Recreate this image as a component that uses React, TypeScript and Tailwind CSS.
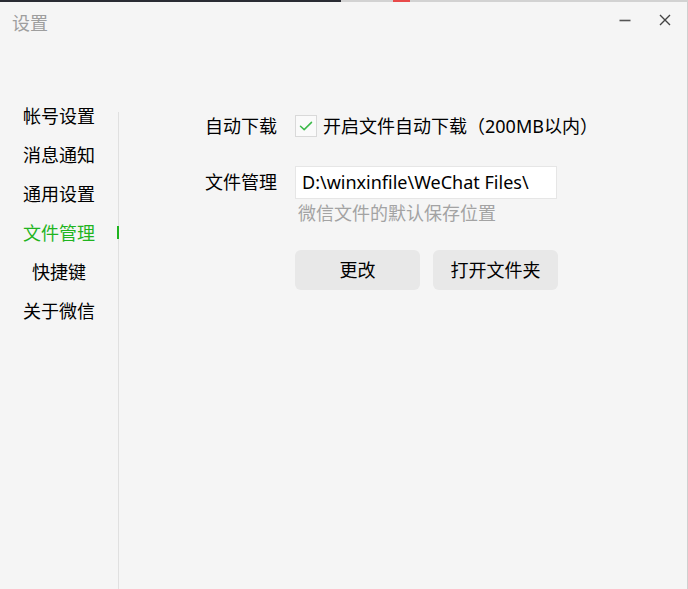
import React from "react";

const font = { fontFamily: '"Noto Sans", "Noto Sans CJK SC", sans-serif' };

function Check() {
  return (
    <div className="w-[22px] h-[22px] border border-[#d9d9d9] bg-[#fafafa] flex items-center justify-center">
      <svg width="16" height="16" viewBox="0 0 16 16" fill="none">
        <path d="M2.5 8.2 L6.2 11.6 L13.5 4.4" stroke="#3cb94a" strokeWidth="1.5" strokeLinecap="round" strokeLinejoin="round" />
      </svg>
    </div>
  );
}

export default function App() {
  const items = ["帐号设置", "消息通知", "通用设置", "文件管理", "快捷键", "关于微信"];
  return (
    <div className="w-[688px] h-[589px] bg-[#f5f5f5] flex flex-col overflow-hidden text-black" style={font}>
      <div className="h-[2px] flex shrink-0">
        <div className="w-[341px] bg-[#2a2c33]" />
        <div className="w-[52px] bg-[#d2d2d2]" />
        <div className="w-[17px] bg-[#e84a4a]" />
        <div className="flex-1 bg-[#d2d2d2]" />
      </div>
      <div className="flex-1 flex flex-col border-r border-[#cfcfcf]">
        <div className="h-[95px] shrink-0 flex items-start">
          <div className="pl-[12px] pt-[9px] text-[18px] leading-[24px] text-[#9e9e9e]">设置</div>
          <div className="flex-1" />
          <div className="pt-[8px] flex">
            <div className="w-[40px] h-[20px] flex items-center justify-center">
              <svg width="12" height="12" viewBox="0 0 12 12"><path d="M0.5 6.5 H11.5" stroke="#555" strokeWidth="1.6" /></svg>
            </div>
            <div className="w-[40px] h-[20px] flex items-center justify-center mr-[2px]">
              <svg width="12" height="12" viewBox="0 0 12 12"><path d="M1 1 L11 11 M11 1 L1 11" stroke="#444" strokeWidth="1.4" /></svg>
            </div>
          </div>
        </div>
        <div className="flex-1 flex">
          <div className="w-[118px] flex flex-col">
            {items.map((t, i) => (
              <div
                key={t}
                className={
                  "relative h-[39px] flex items-center justify-center text-[18px] " +
                  (i === 3 ? "text-[#1fb41f]" : "text-black")
                }
              >
                {t}
                {i === 3 && <div className="absolute right-[-1px] top-[12px] w-[2px] h-[13px] bg-[#1fb41f]" />}
              </div>
            ))}
          </div>
          <div className="w-px bg-[#e0e0e0] mt-[15px]" />
          <div className="flex-1 pl-[86px] pt-[18px] flex flex-col">
            <div className="flex items-center h-[22px]">
              <div className="w-[90px] text-[18px]">自动下载</div>
              <Check />
              <div className="ml-[6px] text-[18px] leading-[22px]">开启文件自动下载（200MB以内）</div>
            </div>
            <div className="flex items-center h-[33px] mt-[29px]">
              <div className="w-[90px] text-[18px]">文件管理</div>
              <div className="w-[262px] h-[33px] bg-white border border-[#e6e6e6] flex items-center pl-[6px] text-[18px]">
                D:\winxinfile\WeChat Files\
              </div>
            </div>
            <div className="ml-[93px] mt-[2px] text-[18px] leading-[24px] text-[#a3a3a3]">微信文件的默认保存位置</div>
            <div className="ml-[90px] mt-[25px] flex gap-[13px]">
              <button className="w-[125px] h-[40px] rounded-[6px] bg-[#e8e8e8] text-[18px]">更改</button>
              <button className="w-[125px] h-[40px] rounded-[6px] bg-[#e8e8e8] text-[18px]">打开文件夹</button>
            </div>
          </div>
        </div>
      </div>
    </div>
  );
}
